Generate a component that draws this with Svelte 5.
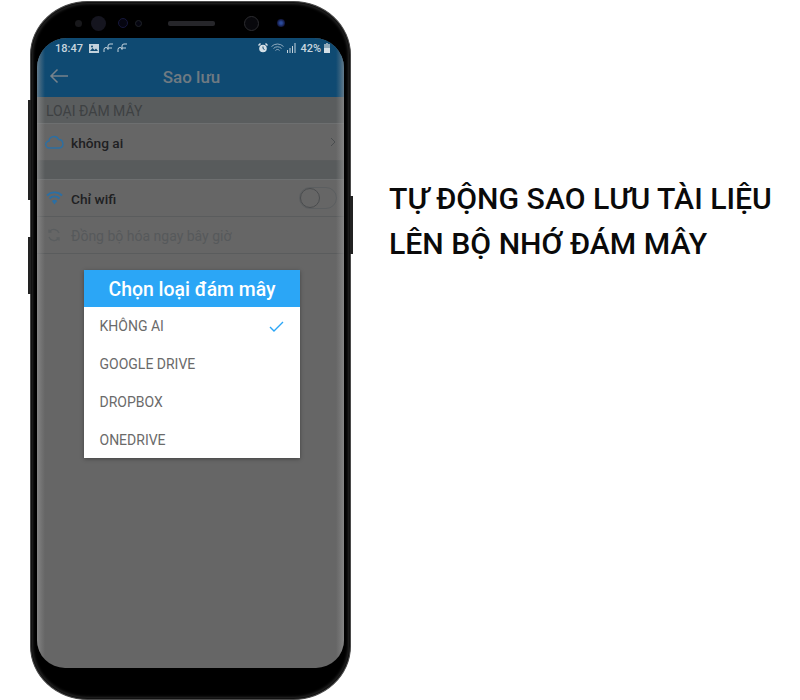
<script lang="ts">
  const clouds = ["KHÔNG AI", "GOOGLE DRIVE", "DROPBOX", "ONEDRIVE"];
  let selected = "KHÔNG AI";
</script>

<div class="page">
  <div class="phone">
    <span class="key key-a"></span>
    <span class="key key-b"></span>
    <span class="key key-c"></span>

    <div class="bezel">
      <span class="sensor s-dot"></span>
      <span class="sensor s-iris"></span>
      <span class="sensor s-ring"></span>
      <span class="sensor s-ring small"></span>
      <span class="speaker"></span>
      <span class="sensor s-cam"></span>
      <span class="sensor s-front"></span>
    </div>

    <div class="screen">
      <div class="status">
        <div class="status-left">
          <span>18:47</span>
          <svg width="10" height="9" viewBox="0 0 10 9"><path d="M0 0h10v9H0z" fill="#c3d2dc" /><path d="M1 7l2.500-3 2 2 1.500-1.500L9 7z" fill="#0f4a72" /><circle cx="3" cy="2.500" r="1" fill="#0f4a72" /></svg>
          <svg width="10" height="10" viewBox="0 0 10 10" fill="none" stroke="#c3d2dc" stroke-width="1"><path d="M1 9V6.500a2 2 0 0 1 4 0V3a2 2 0 0 1 2-2h3M5 5h4" /></svg>
          <svg width="10" height="10" viewBox="0 0 10 10" fill="none" stroke="#c3d2dc" stroke-width="1"><path d="M1 9V6.500a2 2 0 0 1 4 0V3a2 2 0 0 1 2-2h3M5 5h4" /></svg>
        </div>
        <div class="status-right">
          <svg width="10" height="10" viewBox="0 0 10 10"><circle cx="5" cy="5.500" r="3.800" fill="#d4dfe6" /><path d="M5 3.500v2l1.500 1" stroke="#0f4a72" fill="none" /><path d="M0 2l2-2 1 1-2 2zM10 2L8 0 7 1l2 2z" fill="#d4dfe6" /></svg>
          <svg width="13" height="10" viewBox="0 0 13 10" fill="none" stroke="#9fb6c6" stroke-width=".9"><path d="M.5 3.500a8.500 8.500 0 0 1 12 0M2.500 5.500a5.500 5.500 0 0 1 8 0M4.500 7.500a2.500 2.500 0 0 1 4 0" /></svg>
          <svg class="signal" width="9" height="10" viewBox="0 0 9 10" fill="#c3d2dc"><path d="M0 7h1v3H0zM2.500 5h1v5h-1zM5 3h1v7H5zM7.500 0h1v10h-1z" /></svg>
          <span class="pct">42%</span>
          <svg width="6" height="10" viewBox="0 0 6 10"><path d="M2 0h2v1h2v9H0V1h2z" fill="#8fa8b8" /><path d="M0 5h6v5H0z" fill="#d4dfe6" /></svg>
        </div>
      </div>

      <div class="appbar">
        <svg class="back" width="20" height="16" viewBox="0 0 20 16" fill="none" stroke="#77838c" stroke-width="1.500"><path d="M19 8H2M8.500 1.500L2 8l6.500 6.500" /></svg>
        <span class="title">Sao lưu</span>
      </div>

      <div class="section">LOẠI ĐÁM MÂY</div>
      <div class="row">
        <svg width="19" height="14" viewBox="0 0 19 14" fill="none" stroke="#2c6fa3" stroke-width="1.400"><path d="M4.500 13a3.500 3.500 0 0 1-.5-7A5 5 0 0 1 13.500 4.500 4.300 4.300 0 0 1 14.500 13z" /></svg>
        <span class="label">không ai</span>
        <svg class="chev" width="6" height="10" viewBox="0 0 6 10" fill="none" stroke="#4a4d4f" stroke-width="1"><path d="M1 1l4 4-4 4" /></svg>
      </div>
      <div class="spacer"></div>
      <div class="row">
        <svg class="wifi" width="17" height="14" viewBox="0 0 17 14" fill="none" stroke="#2c6fa3" stroke-width="1.900"><path d="M1 4.500a10.500 10.500 0 0 1 15 0M3.500 7.500a7 7 0 0 1 10 0" /><path d="M5.800 10a3.800 3.800 0 0 1 5.400 0L8.500 13.500z" fill="#2c6fa3" stroke="none" /></svg>
        <span class="label">Chỉ wifi</span>
        <span class="toggle"><span class="knob"></span></span>
      </div>
      <div class="row muted">
        <svg width="14" height="14" viewBox="0 0 14 14" fill="none" stroke="#5a5d5f" stroke-width="1.300"><path d="M3 3a5.500 5.500 0 0 1 9 2M11 11a5.500 5.500 0 0 1-9-2M2 1.500V4h2.500M12 12.500V10H9.500" /></svg>
        <span class="label">Đồng bộ hóa ngay bây giờ</span>
      </div>

      <div class="glass"></div>

      <div class="dialog">
        <div class="dialog-head">Chọn loại đám mây</div>
        {#each clouds as cloud}
          <div class="option">
            <span>{cloud}</span>
            {#if cloud === selected}
              <svg width="15" height="11" viewBox="0 0 15 11" fill="none" stroke="#2ba6f6" stroke-width="1.400"><path d="M1 6l4 4 9-9" /></svg>
            {/if}
          </div>
        {/each}
      </div>
    </div>
  </div>

  <div class="caption">
    <p>TỰ ĐỘNG SAO LƯU TÀI LIỆU</p>
    <p>LÊN BỘ NHỚ ĐÁM MÂY</p>
  </div>
</div>

<style>
  :global(body) {
    margin: 0;
    background: #fff;
  }

  .page {
    display: flex;
    align-items: flex-start;
    width: 800px;
    height: 700px;
    overflow: hidden;
    font-family: Roboto, "Liberation Sans", sans-serif;
  }

  .phone {
    position: relative;
    box-sizing: border-box;
    flex: none;
    width: 321px;
    height: 699px;
    margin: 1px 0 0 30px;
    padding: 0 6px;
    background: #000;
    border: 1px solid #4a4a4a;
    border-radius: 58px / 54px;
    box-shadow: inset 0 0 0 1px #111, inset 0 0 3px 2px #2a2a2a;
  }

  .key {
    position: absolute;
    width: 3px;
    background: #222;
  }
  .key-a {
    left: -3px;
    top: 98px;
    height: 100px;
  }
  .key-b {
    left: -3px;
    top: 235px;
    height: 57px;
  }
  .key-c {
    right: -3px;
    top: 194px;
    height: 58px;
  }

  .bezel {
    display: flex;
    align-items: center;
    height: 36px;
    padding: 6px 0 0 38px;
    box-sizing: border-box;
  }

  .sensor {
    flex: none;
    border-radius: 50%;
  }
  .s-dot {
    width: 7px;
    height: 7px;
    background: #18181b;
  }
  .s-iris {
    width: 15px;
    height: 15px;
    margin-left: 9px;
    background: #15151f;
  }
  .s-ring {
    width: 8px;
    height: 8px;
    margin-left: 12px;
    border: 1px solid #15163a;
    background: #050510;
  }
  .s-ring.small {
    width: 5px;
    height: 5px;
    margin-left: 7px;
    border-color: #1f2228;
  }
  .speaker {
    width: 47px;
    height: 5px;
    margin: 0 29px 0 26px;
    background: #26262a;
    border-radius: 2px;
  }
  .s-cam {
    width: 13px;
    height: 13px;
    border: 1px solid #2c2c30;
    background: #08080c;
  }
  .s-front {
    width: 8px;
    height: 8px;
    margin-left: 18px;
    background: radial-gradient(circle, #2a4a9a 20%, #10143a 70%);
  }

  .screen {
    position: relative;
    height: 630px;
    overflow: hidden;
    background: #666;
    border-radius: 30px 30px 28px 28px;
  }

  .status {
    display: flex;
    justify-content: space-between;
    align-items: center;
    height: 20px;
    padding: 0 14px 0 18px;
    background: #0f4a72;
    color: #c9d6df;
    font-size: 11px;
    font-weight: 500;
  }
  .status-left,
  .status-right {
    display: flex;
    align-items: center;
    gap: 4px;
  }
  .status-left span {
    margin-right: 2px;
  }
  .status-right {
    gap: 3px;
  }
  .signal {
    margin-right: 1px;
  }

  .appbar {
    display: flex;
    align-items: center;
    justify-content: center;
    position: relative;
    height: 39px;
    background: #0f4a72;
  }
  .back {
    position: absolute;
    left: 12px;
    top: 10px;
  }
  .title {
    color: #6f7a82;
    font-size: 17px;
    font-weight: 500;
    margin: 0 0 1px 2px;
  }

  .section {
    display: flex;
    align-items: flex-end;
    height: 27px;
    box-sizing: border-box;
    padding: 0 0 4px 9px;
    background: #5a5d5e;
    color: #3e4143;
    font-size: 14px;
    border-bottom: 1px solid #6d6f70;
  }

  .row {
    display: flex;
    align-items: center;
    gap: 7px;
    height: 37px;
    box-sizing: border-box;
    padding: 0 8px 0 8px;
    background: #666;
    border-bottom: 1px solid #5a5c5d;
    color: #1e2022;
    font-size: 13.700px;
    font-weight: 500;
  }
  .row .label {
    flex: 1;
    padding-top: 2px;
  }
  .wifi {
    margin: 0 1px 0 1px;
  }
  .muted {
    color: #56595b;
    font-weight: 400;
    font-size: 14px;
    padding-left: 10px;
    gap: 10px;
  }
  .spacer {
    height: 19px;
    background: #585b5c;
    border-bottom: 1px solid #6d6f70;
    box-sizing: border-box;
  }

  .toggle {
    display: block;
    box-sizing: border-box;
    width: 38px;
    height: 22px;
    margin-right: -1px;
    border: 1px solid #5b5e60;
    border-radius: 11px;
  }
  .knob {
    display: block;
    box-sizing: border-box;
    width: 20px;
    height: 20px;
    border: 1px solid #4a4c4e;
    border-radius: 50%;
    background: #666;
  }

  .glass {
    position: absolute;
    inset: 0;
    pointer-events: none;
    background: linear-gradient(90deg, #9a9a9a99 0, #9a9a9a44 4px, #9a9a9a00 8px, #9a9a9a00 calc(100% - 8px), #9a9a9a44 calc(100% - 4px), #9a9a9a99 100%);
  }

  .dialog {
    position: absolute;
    left: 47px;
    top: 232px;
    width: 216px;
    background: #fff;
    box-shadow: 0 1px 4px rgba(0, 0, 0, 0.35);
  }
  .dialog-head {
    height: 37px;
    line-height: 40px;
    text-align: center;
    background: #2ba6f6;
    color: #fff;
    font-size: 19.400px;
    font-weight: 500;
  }
  .option {
    display: flex;
    align-items: center;
    justify-content: space-between;
    height: 37.750px;
    padding: 1px 16px 0 15.500px;
    box-sizing: border-box;
    color: #6a6a6a;
    font-size: 14px;
    font-weight: 400;
  }

  .caption {
    margin: 176px 0 0 38px;
    color: #0a0a0a;
    font-size: 30.200px;
    font-weight: 500;
    line-height: 45px;
    white-space: nowrap;
  }
  .caption p {
    margin: 0;
  }
</style>
